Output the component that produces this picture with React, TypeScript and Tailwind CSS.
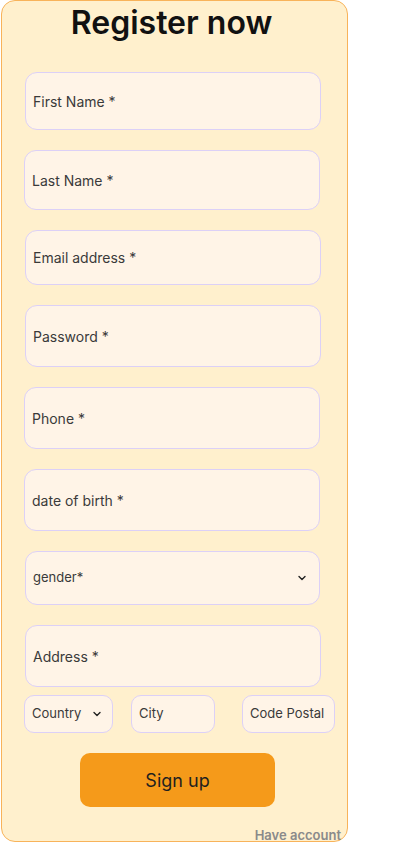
import React from 'react';

const Chevron = ({ className }: { className?: string }) => (
  <svg className={className} width="8" height="6" viewBox="0 0 8 6" fill="none">
    <path d="M1 1.5 L4 4.5 L7 1.5" stroke="#222" strokeWidth="1.4" strokeLinecap="round" strokeLinejoin="round" />
  </svg>
);

const Field = ({ label, h, x }: { label: string; h: string; x: string }) => (
  <div className={`${x} ${h} flex items-center rounded-[12px] border border-[#dcd0f7] bg-[#fff4e7] pl-[7px] text-[14px] text-[#3a3a3a]`}>
    {label}
  </div>
);

export default function App() {
  return (
    <div className="w-[405px] h-[843px] bg-white" style={{ fontFamily: 'Inter, "Noto Sans", sans-serif' }}>
      <div className="relative ml-px w-[347px] h-[842px] rounded-[14px] border border-[#f8b35a] bg-[#fff0cd] flex flex-col">
        <h1 className="mt-[2px] h-[40px] text-center pr-[6px] text-[32px] font-semibold text-[#111] leading-[40px]">
          Register now
        </h1>
        <div className="mt-[29px] flex flex-col gap-[20px]">
          <Field label="First Name *" h="h-[58px]" x="ml-[23px] w-[296px]" />
          <Field label="Last Name *" h="h-[60px]" x="ml-[22px] w-[296px]" />
          <Field label="Email address *" h="h-[55px]" x="ml-[23px] w-[296px]" />
          <Field label="Password *" h="h-[62px]" x="ml-[23px] w-[296px]" />
          <Field label="Phone *" h="h-[62px]" x="ml-[22px] w-[296px]" />
          <Field label="date of birth *" h="h-[62px]" x="ml-[22px] w-[296px]" />
          <div className="ml-[23px] w-[295px] h-[54px] flex items-center justify-between rounded-[12px] border border-[#dcd0f7] bg-[#fff4e7] pl-[7px] pr-[13px] text-[13px] text-[#3a3a3a]">
            <span>gender*</span>
            <Chevron />
          </div>
          <Field label="Address *" h="h-[62px]" x="ml-[23px] w-[296px]" />
        </div>
        <div className="mt-[8px] flex items-center text-[13px] text-[#3a3a3a]">
          <div className="ml-[22px] w-[89px] h-[38px] flex items-center rounded-[10px] border border-[#dcd0f7] bg-[#fff4e7] pl-[7px]">
            <span>Country</span>
            <Chevron className="ml-[12px]" />
          </div>
          <div className="ml-[18px] w-[84px] h-[38px] flex items-center rounded-[10px] border border-[#dcd0f7] bg-[#fff4e7] pl-[7px]">
            City
          </div>
          <div className="ml-[27px] w-[93px] h-[38px] flex items-center rounded-[10px] border border-[#dcd0f7] bg-[#fff4e7] pl-[7px] whitespace-nowrap">
            Code Postal
          </div>
        </div>
        <div className="mt-[20px] ml-[78px] w-[195px] h-[54px] flex items-center justify-center rounded-[10px] bg-[#f59a1a] text-[18px] text-[#1f1f1f]">
          Sign up
        </div>
        <div className="absolute right-[6px] bottom-[-1px] text-[13px] font-semibold text-[#8a8a8a] leading-[14px]">
          Have account
        </div>
      </div>
    </div>
  );
}
